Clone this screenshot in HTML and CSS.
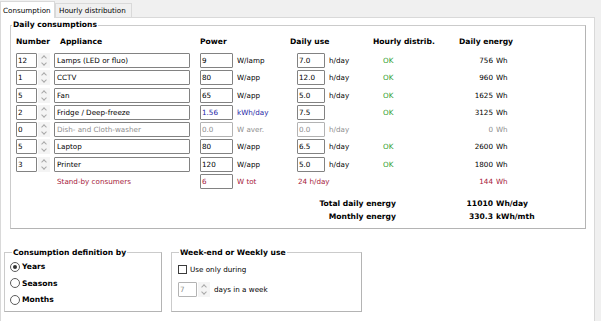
FILE: index.html
```html
<!DOCTYPE html>
<html lang="en">
<head>
  <meta charset="UTF-8">
  <title>Consumption</title>
  <link rel="stylesheet" href="styles.css">
</head>
<body>
  <div class="tabs">
    <div class="tab active">Consumption</div>
    <div class="tab">Hourly distribution</div>
  </div>
  <div class="page">
    <fieldset class="group daily">
      <legend>Daily consumptions</legend>
      <div class="inner">
        <div class="head">
          <span>Number</span><span>Appliance</span><span>Power</span><span>Daily use</span><span>Hourly distrib.</span><span>Daily energy</span>
        </div>

        <div class="row">
          <div class="num"><input class="box n" value="12"><span class="spin"></span></div>
          <input class="box name" value="Lamps (LED or fluo)">
          <input class="box pw" value="9"><span>W/lamp</span>
          <input class="box du" value="7.0"><span>h/day</span>
          <span class="ok">OK</span><span class="val">756</span><span class="wh">Wh</span>
        </div>
        <div class="row">
          <div class="num"><input class="box n" value="1"><span class="spin"></span></div>
          <input class="box name" value="CCTV">
          <input class="box pw" value="80"><span>W/app</span>
          <input class="box du" value="12.0"><span>h/day</span>
          <span class="ok">OK</span><span class="val">960</span><span class="wh">Wh</span>
        </div>
        <div class="row">
          <div class="num"><input class="box n" value="5"><span class="spin"></span></div>
          <input class="box name" value="Fan">
          <input class="box pw" value="65"><span>W/app</span>
          <input class="box du" value="5.0"><span>h/day</span>
          <span class="ok">OK</span><span class="val">1625</span><span class="wh">Wh</span>
        </div>
        <div class="row">
          <div class="num"><input class="box n" value="2"><span class="spin"></span></div>
          <input class="box name" value="Fridge / Deep-freeze">
          <input class="box pw blue" value="1.56"><span class="blue">kWh/day</span>
          <input class="box du" value="7.5"><span></span>
          <span class="ok">OK</span><span class="val">3125</span><span class="wh">Wh</span>
        </div>
        <div class="row">
          <div class="num"><input class="box n" value="0"><span class="spin"></span></div>
          <input class="box name gray" value="Dish- and Cloth-washer">
          <input class="box pw gray off" value="0.0"><span class="gray">W aver.</span>
          <input class="box du gray off" value="0.0"><span class="gray">h/day</span>
          <span></span><span class="val gray">0</span><span class="wh gray">Wh</span>
        </div>
        <div class="row">
          <div class="num"><input class="box n" value="5"><span class="spin"></span></div>
          <input class="box name" value="Laptop">
          <input class="box pw" value="80"><span>W/app</span>
          <input class="box du" value="6.5"><span>h/day</span>
          <span class="ok">OK</span><span class="val">2600</span><span class="wh">Wh</span>
        </div>
        <div class="row">
          <div class="num"><input class="box n" value="3"><span class="spin"></span></div>
          <input class="box name" value="Printer">
          <input class="box pw" value="120"><span>W/app</span>
          <input class="box du" value="5.0"><span>h/day</span>
          <span class="ok">OK</span><span class="val">1800</span><span class="wh">Wh</span>
        </div>
        <div class="row red">
          <span></span>
          <span class="standby">Stand-by consumers</span>
          <input class="box pw red" value="6"><span>W tot</span>
          <span class="hours">24 h/day</span>
          <span></span><span class="val">144</span><span class="wh">Wh</span>
        </div>

        <div class="totals">
          <span class="label">Total daily energy</span><span class="val">11010</span><span class="wh">Wh/day</span>
          <span class="label">Monthly energy</span><span class="val">330.3</span><span class="wh">kWh/mth</span>
        </div>
      </div>
    </fieldset>

    <div class="bottom">
      <fieldset class="group defn">
        <legend>Consumption definition by</legend>
        <div class="inner">
          <div class="opt"><span class="radio on"></span>Years</div>
          <div class="opt"><span class="radio"></span>Seasons</div>
          <div class="opt"><span class="radio"></span>Months</div>
        </div>
      </fieldset>
      <fieldset class="group week">
        <legend>Week-end or Weekly use</legend>
        <div class="inner">
          <div class="check"><span class="cbox"></span>Use only during</div>
          <div class="days"><input class="box d off gray" value="7"><span class="spin"></span><span class="dlabel">days in a week</span></div>
        </div>
      </fieldset>
    </div>
  </div>
</body>
</html>
```

FILE: styles.css
```css
* { box-sizing: border-box; }
html, body { margin: 0; height: 100%; }
body { background: #f0f0f0; font-family: "DejaVu Sans", Tahoma, sans-serif; font-size: 7.2px; color: #000; overflow: hidden; }

/* tabs */
.tabs { display: flex; align-items: flex-end; height: 17px; }
.tab { width: 77px; height: 14px; padding-left: 3px; line-height: 13px; background: #f0f0f0; border: 1px solid #d9d9d9; border-bottom: none; }
.tab.active { width: 55px; height: 17px; padding-left: 2px; line-height: 17px; background: #fff; margin-bottom: -1px; position: relative; z-index: 1; }

/* page */
.page { width: 595px; height: 310px; background: #fff; border: 1px solid #d9d9d9; }

.group { margin: 0; padding: 0; border: 1px solid #cbcbcb; border-right-color: #b4b4b4; border-bottom-color: #b4b4b4; }
.group legend { margin-left: 1px; padding: 0 1px; font-weight: bold; font-size: 7.6px; line-height: 10px; color: #000; }

.daily { margin: 2px 0 0 9px; width: 576px; }
.daily .inner { padding: 7px 0 4.6px 5px; }

.head { display: grid; grid-template-columns: 44px 140px 90px 83px 86px auto; height: 10px; line-height: 10px; margin-bottom: 4.7px; font-weight: bold; font-size: 7.6px; }

.row { display: grid; grid-template-columns: 38px 146px 37px 60px 32px 54px 60px 50px auto; height: 17.33px; align-items: center; white-space: nowrap; }
.num { display: flex; align-items: center; gap: 1px; }

.box { display: block; height: 15px; padding: 0 1px; border: 1px solid #828282; border-radius: 1px; background: #fff; font-family: inherit; font-size: 7.2px; color: #000; outline: none; }
.box.n { width: 21px; }
.box.name { width: 136px; padding-left: 2px; }
.box.pw { width: 33px; }
.box.du { width: 28px; }
.box.d { width: 19px; }
.box.off { border-color: #b3b3b3; }

.spin { position: relative; display: block; width: 12px; height: 15px; background: #f4f4f4; }
.spin::before, .spin::after { content: ""; position: absolute; left: 4px; width: 3px; height: 3px; border: solid #a8a8a8; border-width: 1px 0 0 1px; transform: rotate(45deg); }
.spin::before { top: 3px; }
.spin::after { top: 8px; transform: rotate(225deg); }

.ok { color: #2f9e2f; }
.val { text-align: right; }
.wh { padding-left: 3px; }
.blue, .box.blue { color: #2626a6; }
.gray, .box.gray { color: #8e8e8e; }
.red, .red .box, .box.red { color: #a6203a; }
.standby { padding-left: 3px; }
.hours { grid-column: span 2; padding-left: 1px; }

.totals { display: grid; grid-template-columns: 380px 97px auto; grid-auto-rows: 13.4px; align-items: center; margin-top: 6.3px; font-weight: bold; font-size: 7.6px; }
.totals .label { text-align: right; }

/* bottom groups */
.bottom { display: flex; gap: 9px; margin: 19px 0 0 3px; }
.defn { width: 158px; }
.defn legend { margin-left: 7px; }
.defn .inner { padding: 0.5px 0 3px 5px; }
.opt { display: flex; align-items: center; gap: 2px; height: 16.5px; font-weight: bold; font-size: 7.6px; }
.radio { position: relative; width: 10px; height: 10px; border: 1px solid #5c5c5c; border-radius: 50%; background: #fff; }
.radio.on::after { content: ""; position: absolute; left: 2px; top: 2px; width: 4px; height: 4px; border-radius: 50%; background: #333; }

.week { width: 191px; }
.week legend { margin-left: 7px; }
.week .inner { padding: 5px 0 7px 6px; }
.check { display: flex; align-items: center; gap: 3px; height: 14px; }
.cbox { width: 9px; height: 9px; border: 1px solid #3c3c3c; background: #fff; }
.days { display: flex; align-items: center; gap: 1px; height: 16px; margin-top: 5px; }
.dlabel { margin-left: 3px; }
```
